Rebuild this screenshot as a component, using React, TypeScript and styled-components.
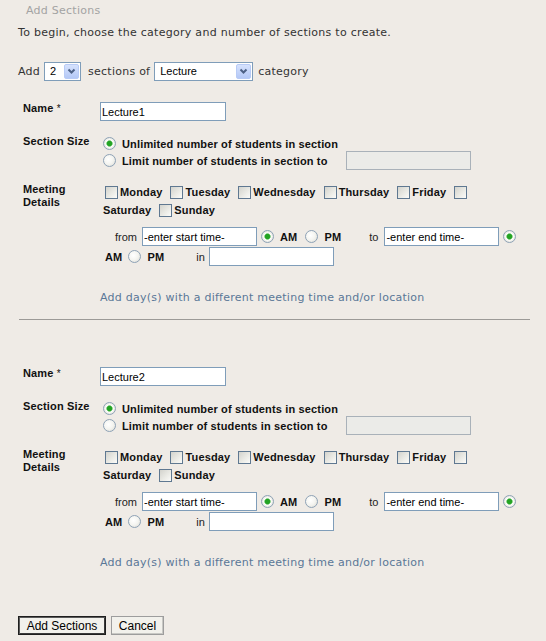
import React from "react";
import styled, { createGlobalStyle } from "styled-components";

const GlobalStyle = createGlobalStyle`
  html, body { margin: 0; padding: 0; background: #efebe6; }
  body { font-family: "DejaVu Sans", Verdana, sans-serif; font-size: 11px; color: #333; }
  * { box-sizing: border-box; }
`;

const Page = styled.div`
  width: 546px;
  min-height: 641px;
  padding: 4px 0 0 18px;
`;

const Title = styled.div`
  margin-left: 8px;
  color: #a3a3a3;
  font-size: 11px;
  line-height: 14px;
  letter-spacing: 0.25px;
`;

const Intro = styled.p`
  margin: 8px 0 0;
  color: #333;
  font-size: 11px;
  line-height: 14px;
  letter-spacing: 0.28px;
`;

const AddRow = styled.div`
  display: flex;
  align-items: center;
  height: 19px;
  margin-top: 22px;
  gap: 4px;
  line-height: 14px;
  color: #333;
  letter-spacing: 0.25px;
`;

const SelectBox = styled.div<{ $w: number; $mr?: number }>`
  display: inline-flex;
  align-items: stretch;
  width: ${(p) => p.$w}px;
  height: 19px;
  margin-right: ${(p) => p.$mr ?? 0}px;
  border: 1px solid #7f9db9;
  background: #fff;
  padding: 1px;
  letter-spacing: 0;
`;

const SelectText = styled.span`
  flex: 1;
  font-family: "Liberation Sans", Arial, sans-serif;
  font-size: 11px;
  line-height: 15px;
  padding-left: 4px;
  color: #000;
`;

const SelectArrow = styled.span`
  width: 15px;
  display: flex;
  align-items: center;
  justify-content: center;
  border: 1px solid #b8cbf6;
  border-radius: 2px;
  background: linear-gradient(#d6e2fd, #b4c8f6);
`;

const Block = styled.div<{ $mt: number }>`
  margin-top: ${(p) => p.$mt}px;
  width: 512px;
`;

const FormGrid = styled.div`
  display: grid;
  grid-template-columns: 77px 1fr;
  row-gap: 14px;
  padding-left: 5px;
`;

const FieldLabel = styled.div`
  font-family: "Liberation Sans", Arial, sans-serif;
  font-weight: bold;
  font-size: 11px;
  line-height: 13px;
  letter-spacing: 0.15px;
  color: #111;
`;

const Star = styled.span`
  font-weight: normal;
  font-size: 10px;
`;

const TextInput = styled.input<{ $w: number; $disabled?: boolean }>`
  width: ${(p) => p.$w}px;
  height: 19px;
  margin: 0;
  padding: 0 1px;
  border: 1px solid ${(p) => (p.$disabled ? "#a9b1b9" : "#7f9db9")};
  background: ${(p) => (p.$disabled ? "#ebebe8" : "#fff")};
  font-family: "Liberation Sans", Arial, sans-serif;
  font-size: 11px;
  color: #000;
  outline: none;
`;

const SizeGrid = styled.div`
  display: grid;
  grid-template-columns: 246px 125px;
  grid-auto-rows: 17px;
  align-items: center;
`;

const LimitInput = styled(TextInput)`
  margin: -1px 0;
`;

const RadioOption = styled.label`
  display: flex;
  align-items: center;
  font-family: "Liberation Sans", Arial, sans-serif;
  font-weight: bold;
  font-size: 11px;
  letter-spacing: 0.15px;
  color: #111;
`;

const Radio = styled.input.attrs({ type: "radio" })<{ $ml?: number; $mr?: number }>`
  appearance: none;
  -webkit-appearance: none;
  width: 13px;
  height: 13px;
  flex: none;
  margin: 0 ${(p) => p.$mr ?? 6}px 0 ${(p) => p.$ml ?? 3}px;
  border: 1px solid #8ea2b6;
  border-radius: 50%;
  background: radial-gradient(circle at 40% 40%, #ffffff 0%, #f4f4f0 50%, #d9d9d2 100%);
  &:checked {
    background: radial-gradient(circle, #24a324 0 2.2px, #8fd48f 3px, #ffffff 3.6px, #f0f0ea 60%, #d9d9d2 100%);
  }
`;

const DayList = styled.div`
  display: flex;
  flex-wrap: wrap;
  align-items: center;
  width: 400px;
  padding-left: 3px;
`;

const Checkbox = styled.input.attrs({ type: "checkbox" })`
  appearance: none;
  -webkit-appearance: none;
  width: 13px;
  height: 13px;
  flex: none;
  margin: 0 2px;
  border: 1px solid #5f7891;
  background: linear-gradient(135deg, #d3d3cd 0%, #ececE7 60%, #fbfbf9 100%);
`;

const DayName = styled.span`
  font-family: "Liberation Sans", Arial, sans-serif;
  font-weight: bold;
  font-size: 11px;
  line-height: 18px;
  letter-spacing: 0.15px;
  color: #111;
  margin-right: 6px;
`;

const TimeRow = styled.div`
  display: flex;
  flex-wrap: wrap;
  align-items: center;
  row-gap: 1px;
  margin-top: 8px;
  padding-left: 5px;
`;

const Word = styled.span<{ $ml?: number; $mr?: number }>`
  font-family: "Liberation Sans", Arial, sans-serif;
  font-size: 11px;
  color: #222;
  margin: 0 ${(p) => p.$mr ?? 0}px 0 ${(p) => p.$ml ?? 0}px;
`;

const Meridiem = styled.span`
  font-family: "Liberation Sans", Arial, sans-serif;
  font-weight: bold;
  font-size: 11px;
  letter-spacing: 0.15px;
  color: #111;
`;

const LinkRow = styled.div`
  margin-top: 25px;
  padding-left: 82px;
  line-height: 14px;
`;

const AddDayLink = styled.a`
  color: #5a7797;
  font-size: 11px;
  letter-spacing: 0.25px;
  text-decoration: none;
  cursor: pointer;
`;

const Divider = styled.hr`
  margin: 14px 0 0 1px;
  width: 511px;
  height: 0;
  border: 0;
  border-top: 1px solid #9c9a97;
`;

const ButtonRow = styled.div`
  display: flex;
  gap: 5px;
  margin-top: 46px;
`;

const Button = styled.button<{ $primary?: boolean; $w: number }>`
  width: ${(p) => p.$w}px;
  height: 19px;
  padding: 0;
  font-family: "Liberation Sans", Arial, sans-serif;
  font-size: 12px;
  color: #000;
  background: #f2f1ec;
  border: 1px solid ${(p) => (p.$primary ? "#1e1e1e" : "#9d9d9d")};
  box-shadow: ${(p) =>
    p.$primary
      ? "inset 1px 1px 0 #5a5a5a, inset -1px -1px 0 #3a3a3a"
      : "inset -1px -1px 0 #c8c8c4"};
`;

const Chevron = () => (
  <svg width="9" height="7" viewBox="0 0 9 7">
    <path d="M1.5 1.5 L4.5 4.5 L7.5 1.5" stroke="#4d6185" strokeWidth="2" fill="none" />
  </svg>
);

const Select = ({ value, w, mr }: { value: string; w: number; mr?: number }) => (
  <SelectBox $w={w} $mr={mr}>
    <SelectText>{value}</SelectText>
    <SelectArrow>
      <Chevron />
    </SelectArrow>
  </SelectBox>
);

const days = ["Monday", "Tuesday", "Wednesday", "Thursday", "Friday", "Saturday", "Sunday"];

const SectionBlock = ({ name, mt }: { name: string; mt: number }) => (
  <Block $mt={mt}>
    <FormGrid>
      <FieldLabel>
        Name <Star>*</Star>
      </FieldLabel>
      <div>
        <TextInput $w={126} defaultValue={name} />
      </div>

      <FieldLabel>Section Size</FieldLabel>
      <SizeGrid>
        <RadioOption>
          <Radio name={`size-${name}`} defaultChecked />
          Unlimited number of students in section
        </RadioOption>
        <span />
        <RadioOption>
          <Radio name={`size-${name}`} />
          Limit number of students in section to
        </RadioOption>
        <LimitInput $w={125} $disabled disabled />
      </SizeGrid>

      <FieldLabel>
        Meeting
        <br />
        Details
      </FieldLabel>
      <div>
        <DayList>
          {days.map((d) => (
            <React.Fragment key={d}>
              <Checkbox />
              <DayName>{d}</DayName>
            </React.Fragment>
          ))}
        </DayList>
        <TimeRow>
          <Word $ml={10} $mr={5}>from</Word>
          <TextInput $w={115} defaultValue="-enter start time-" />
          <Radio name={`start-${name}`} defaultChecked $ml={4} />
          <Meridiem>AM</Meridiem>
          <Radio name={`start-${name}`} $ml={8} />
          <Meridiem>PM</Meridiem>
          <Word $ml={28} $mr={6}>to</Word>
          <TextInput $w={115} defaultValue="-enter end time-" />
          <Radio name={`end-${name}`} defaultChecked $ml={4} />
          <Meridiem>AM</Meridiem>
          <Radio name={`end-${name}`} $ml={6} />
          <Meridiem>PM</Meridiem>
          <Word $ml={32} $mr={4}>in</Word>
          <TextInput $w={125} />
        </TimeRow>
      </div>
    </FormGrid>
    <LinkRow>
      <AddDayLink>Add day(s) with a different meeting time and/or location</AddDayLink>
    </LinkRow>
  </Block>
);

export default function App() {
  return (
    <>
      <GlobalStyle />
      <Page>
        <Title>Add Sections</Title>
        <Intro>To begin, choose the category and number of sections to create.</Intro>
        <AddRow>
          <span>Add</span>
          <Select value="2" w={37} mr={3} />
          <span>sections of</span>
          <Select value="Lecture" w={99} mr={1} />
          <span>category</span>
        </AddRow>
        <SectionBlock name="Lecture1" mt={21} />
        <Divider />
        <SectionBlock name="Lecture2" mt={47} />
        <ButtonRow>
          <Button $primary $w={88}>Add Sections</Button>
          <Button $w={53}>Cancel</Button>
        </ButtonRow>
      </Page>
    </>
  );
}
